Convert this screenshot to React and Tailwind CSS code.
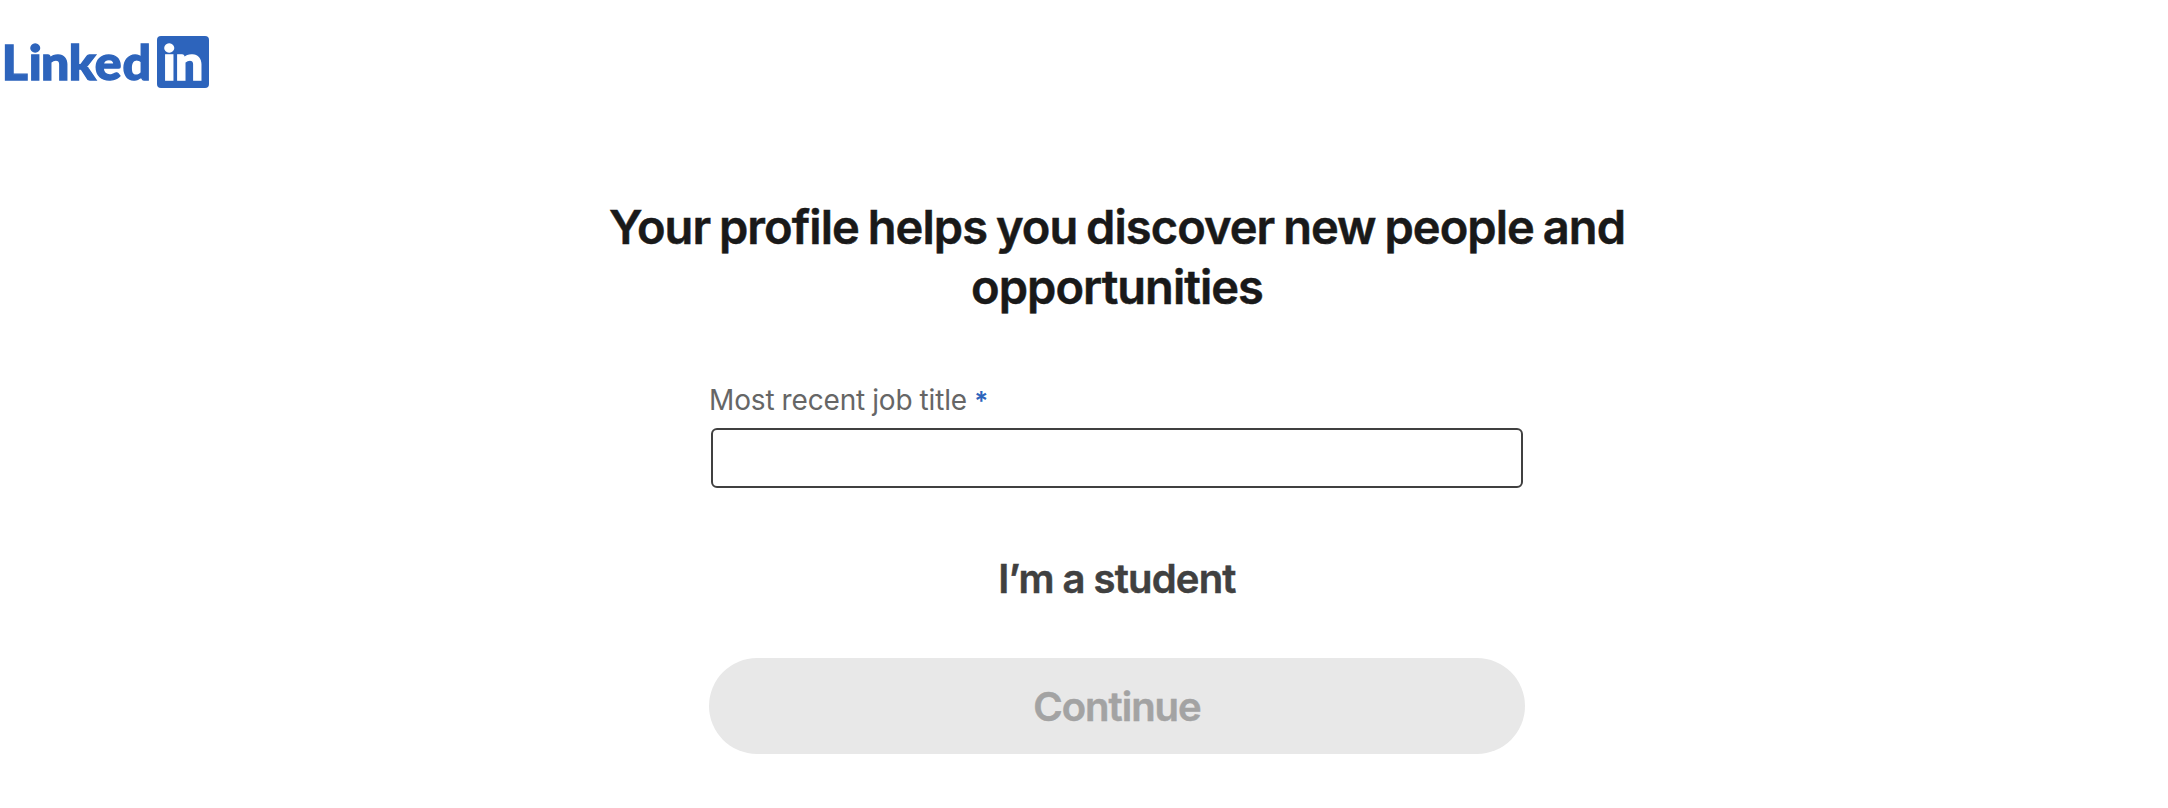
function Logo() {
  return (
    <svg
      className="-my-[10px] block h-[72px] w-[209px]"
      viewBox="0 -10 209 72"
      role="img"
      aria-label="LinkedIn"
      fontFamily="Lato, sans-serif"
      fontWeight="900"
      fontSize="50"
      strokeWidth="1.4"
    >
      <text transform="translate(0 43.5) scale(1 0.94)" x="1.7 28.7 41 68.8 94.7 122.4" y="0" fill="#2d64bc" stroke="#2d64bc">
        Linked
      </text>
      <rect x="157" y="0" width="52" height="52" rx="4" fill="#2d64bc" />
      <text transform="translate(0 43.5) scale(1 0.94)" x="162.8 174.9" y="0" fill="#ffffff" stroke="#ffffff">
        in
      </text>
    </svg>
  );
}

export default function App() {
  return (
    <div className="flex h-[808px] w-[2168px] flex-col bg-white font-['Inter',sans-serif]">
      <header className="pt-9">
        <Logo />
      </header>
      <main className="ml-[66px] flex flex-col items-center pt-[109px]">
        <h1 className="w-[1060px] text-center text-[47px] leading-[60px] font-semibold tracking-[-0.95px] [word-spacing:-2px] [-webkit-text-stroke:0.5px_#191919] text-[#191919]">
          Your profile helps you discover new people and opportunities
        </h1>
        <form className="mt-[65px] flex w-[816px] flex-col">
          <label htmlFor="title" className="text-[28px] leading-[36px] tracking-[-0.15px] [word-spacing:-0.6px] text-[#666666]">
            Most recent job title <span className="font-semibold text-[26px] leading-none text-[#2d64bc]">*</span>
          </label>
          <input
            id="title"
            className="mx-[2px] mt-[10px] h-[60px] rounded-[6px] border-2 border-[#404040] bg-white px-4 text-[28px] outline-none"
          />
          <button type="button" className="mt-[66px] h-[50px] text-[40px] leading-[50px] font-semibold tracking-[-0.8px] [word-spacing:-0.5px] [-webkit-text-stroke:0.5px_#404040] text-[#404040]">
            I’m a student
          </button>
          <button type="button" disabled className="mt-[54px] h-24 rounded-full bg-[#e8e8e8] pt-[2px] text-[40px] font-semibold tracking-[-1px] [-webkit-text-stroke:0.5px_#a3a3a3] text-[#a3a3a3]">
            Continue
          </button>
        </form>
      </main>
    </div>
  );
}
